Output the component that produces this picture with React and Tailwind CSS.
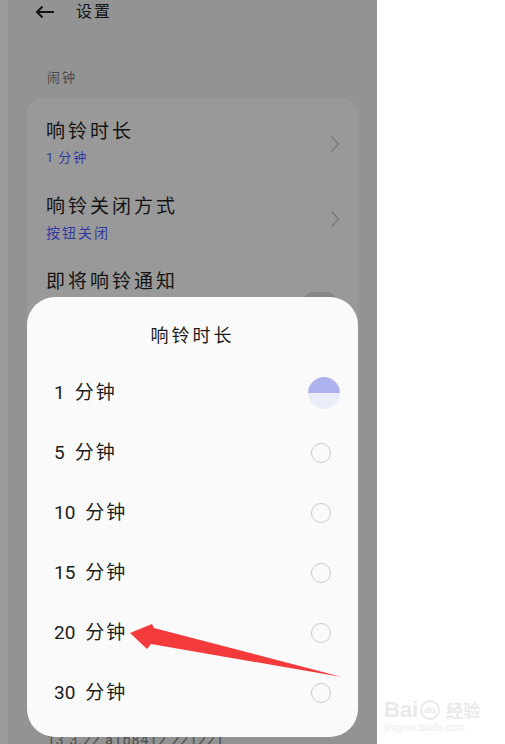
const font = { fontFamily: '"Roboto", "Noto Sans CJK SC", sans-serif' };

const Chevron = () => (
  <svg width="10" height="18" viewBox="0 0 10 18" fill="none" stroke="#7b7b7b" strokeWidth="1.4">
    <path d="M1.5 1.5 L8.5 9 L1.5 16.5" />
  </svg>
);

const options = ["1", "5", "10", "15", "20", "30"];

const App = () => {
  return (
    <div className="relative w-[505px] h-[744px] overflow-hidden flex bg-white" style={font}>
      <div className="w-[377px] h-full flex bg-[#939393]">
        <div className="w-2 h-full bg-[#9a9a9a]" />
        <div className="relative flex-1 flex flex-col">
          <div className="h-6 flex items-center pl-[27px]">
            <svg width="20" height="14" viewBox="0 0 20 14" fill="none" stroke="#121212" strokeWidth="2">
              <path d="M19 7 H2 M7.5 1.5 L2 7 L7.5 12.5" />
            </svg>
            <span className="ml-[21px] text-[16px] tracking-[2px] text-[#151515]">设置</span>
          </div>
          <div className="mt-[45px] pl-[39px] h-[18px] leading-[18px] text-[13px] tracking-[2px] text-[#4a4a4a]">闹钟</div>
          <div className="mt-[11px] ml-[19px] mr-[19px] h-[620px] shrink-0 rounded-2xl bg-[#999999] pt-[22px] pl-[19px] pr-[18px] flex flex-col">
            <div className="flex items-center justify-between">
              <div>
                <div className="h-6 leading-6 text-[19px] tracking-[3px] text-[#141414]">响铃时长</div>
                <div className="mt-[5px] h-[18px] leading-[18px] text-[13px] text-[#2f3aa3]">
                  1<span className="ml-[5px] tracking-[2px]">分钟</span>
                </div>
              </div>
              <Chevron />
            </div>
            <div className="mt-[28px] flex items-center justify-between">
              <div>
                <div className="h-6 leading-6 text-[19px] tracking-[3px] text-[#141414]">响铃关闭方式</div>
                <div className="mt-[5px] h-[18px] leading-[18px] text-[14px] tracking-[2px] text-[#2f3aa3]">按钮关闭</div>
              </div>
              <Chevron />
            </div>
            <div className="mt-[28px] flex items-start justify-between">
              <div className="h-6 leading-6 text-[19px] tracking-[3px] text-[#141414]">即将响铃通知</div>
              <div className="mt-[22px] mr-[2px] w-9 h-6 rounded-full bg-[#868686]" />
            </div>
          </div>
          <div className="mt-[13px] pl-[39px] text-[14px] leading-[18px] tracking-[1px] text-[#4d4d4d] whitespace-nowrap">
            13.3.22 a1b8412 221221
          </div>

          <div className="absolute left-[19px] top-[297px] w-[331px] h-[440px] rounded-[28px] bg-[#fafafa] pt-[27px] flex flex-col">
            <div className="h-6 leading-6 text-center text-[18px] tracking-[3px] text-[#1a1a1a]">响铃时长</div>
            <div className="mt-[15px] flex flex-col">
              {options.map((n, i) => (
                <div key={n} className="h-[60px] flex items-center justify-between pl-[27px] pr-[18px]">
                  <span className="text-[19px] text-[#1c1c1c]">
                    {n}
                    <span className="ml-[10px] tracking-[2px]">分钟</span>
                  </span>
                  <div className="w-8 h-8 flex items-center justify-end">
                    {i === 0 ? (
                      <div className="w-8 h-8 rounded-full bg-[linear-gradient(to_bottom,#aeb3ee_50%,#ebecfa_50%)]" />
                    ) : (
                      <div className="mr-[9px] w-5 h-5 rounded-full border border-[#c9c9c9]" />
                    )}
                  </div>
                </div>
              ))}
            </div>
          </div>
        </div>
      </div>
      <div className="flex-1 h-full bg-white" />

      <svg className="absolute left-0 top-0 pointer-events-none" width="505" height="744" viewBox="0 0 505 744">
        <polygon points="130,633 152,624 154,628 342,677 151,644 147,649" fill="#f33b3b" />
      </svg>

      <div className="absolute left-[384px] top-[698px] flex flex-col items-start pointer-events-none">
        <div className="flex items-center gap-[2px] text-[#e9e9e9]">
          <span className="text-[22px] leading-6 font-bold" style={{ fontFamily: '"Liberation Sans", sans-serif' }}>Bai</span>
          <span className="w-5 h-5 rounded-full border-2 border-[#e9e9e9] flex items-center justify-center text-[9px] font-bold leading-none" style={{ fontFamily: '"Liberation Sans", sans-serif' }}>du</span>
          <span className="ml-[4px] text-[17px] leading-6 font-bold" style={{ fontFamily: '"Noto Sans CJK SC", sans-serif' }}>经验</span>
        </div>
        <div className="text-[10px] leading-[12px] text-[#ebebeb]" style={{ fontFamily: '"Liberation Sans", sans-serif' }}>jingyan.baidu.com</div>
      </div>
    </div>
  );
};

export default App;
